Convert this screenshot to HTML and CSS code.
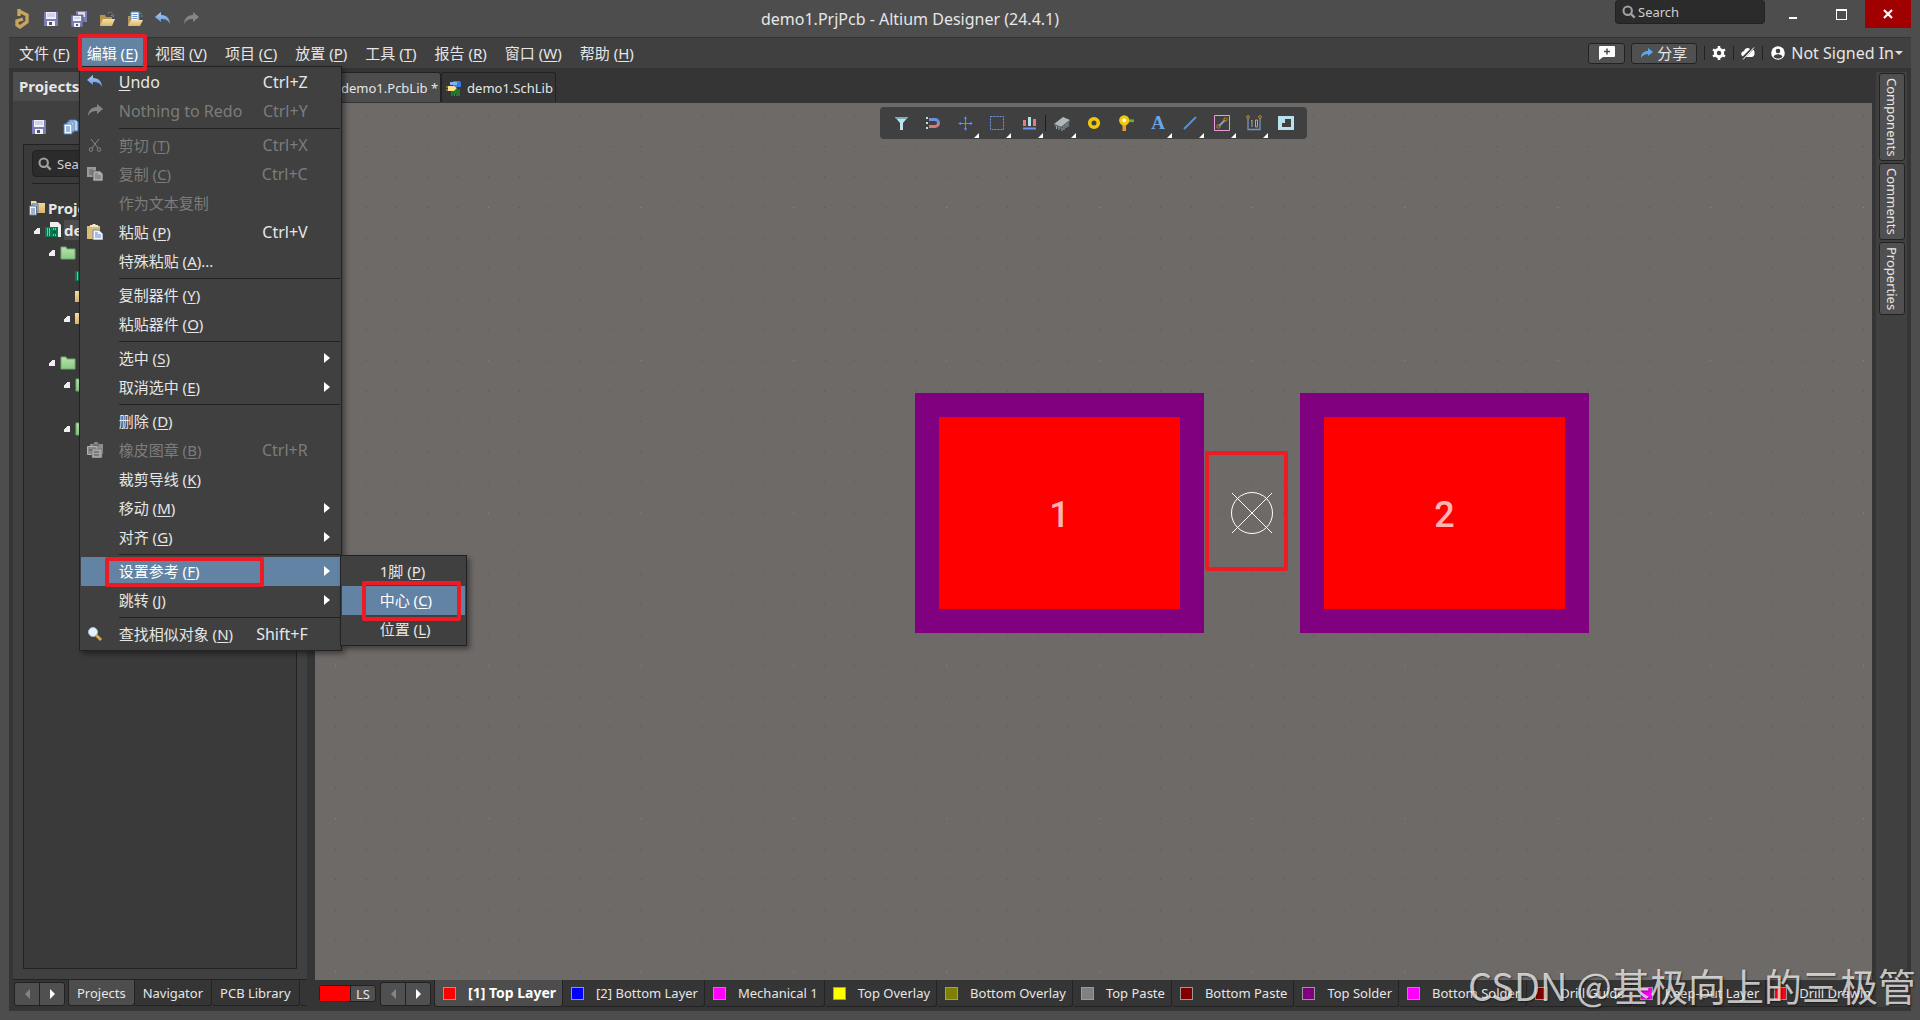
FILE: index.html
```html
<!DOCTYPE html>
<html lang="zh-CN">
<head>
<meta charset="utf-8">
<meta name="viewport" content="width=device-width, initial-scale=1">
<title>demo1.PrjPcb - Altium Designer (24.4.1)</title>
<link rel="stylesheet" href="styles.css">
</head>
<body class="app">
<svg class="defs" aria-hidden="true">
  <defs>
    <linearGradient id="g-blue" x1="0" y1="0" x2="0" y2="1"><stop offset="0" stop-color="#a9cdf7"/><stop offset="1" stop-color="#5f8fdc"/></linearGradient>
    <linearGradient id="g-folder" x1="0" y1="0" x2="0" y2="1"><stop offset="0" stop-color="#f6dfa6"/><stop offset="1" stop-color="#d9b568"/></linearGradient>
    <linearGradient id="g-green" x1="0" y1="0" x2="0" y2="1"><stop offset="0" stop-color="#b9e3b0"/><stop offset="1" stop-color="#8bca84"/></linearGradient>
    <symbol id="i-logo" viewBox="0 0 16 20"><path d="M4 0v7M4 2l8 4v7l-7 5-3-2v-4l6-2" fill="none" stroke="#c6a55c" stroke-width="3.400"/></symbol>
    <symbol id="i-save" viewBox="0 0 16 16"><path d="M1 1h14v14H1z" fill="#7b7cb8"/><path d="M3 1h10v7H3z" fill="#eef0fa"/><path d="M4 3h8M4 5h8" stroke="#b4b6d8"/><path d="M4 10h8v5H4z" fill="#f4f4f4"/><path d="M6 11h3v3H6z" fill="#555"/></symbol>
    <symbol id="i-saveall" viewBox="0 0 16 16"><path d="M5 0h11v11H5z" fill="#7b7cb8"/><path d="M7 1h7v5H7z" fill="#d8dbf2"/><path d="M0 4h12v12H0z" fill="#7b7cb8" stroke="#4d4d4d" stroke-width=".6"/><path d="M2 5h8v5H2z" fill="#eef0fa"/><path d="M3 7h6" stroke="#b4b6d8"/><path d="M3 12h6v4H3z" fill="#f4f4f4"/><path d="M5 13h2v2H5z" fill="#555"/></symbol>
    <symbol id="i-open" viewBox="0 0 16 16"><path d="M1 4h5l1 2h6v9H1z" fill="#b99352"/><path d="M4 8h12l-3 7H1z" fill="url(#g-folder)"/><path d="M9 2c3-2 5 0 5 3M12 4l2 2 2-2" fill="none" stroke="#5c91b5" stroke-dasharray="2 1"/></symbol>
    <symbol id="i-opendoc" viewBox="0 0 16 16"><path d="M1 5h4v10H1z" fill="#b99352"/><path d="M4 1h8v9H4z" fill="#f5f8ff" stroke="#5d8fc9"/><path d="M5.500 3.500h5M5.500 5.500h5M5.500 7.500h5" stroke="#6b93c9"/><path d="M4 9h12l-3 6H1z" fill="url(#g-folder)"/><path d="M13 2c2 0 2 2 2 4" fill="none" stroke="#5c91b5" stroke-dasharray="2 1"/></symbol>
    <symbol id="i-undo" viewBox="0 0 16 16"><path d="M6 1v3c6 0 9 4 9 9-2-4-5-5-9-5v3L0 6z" fill="url(#g-blue)"/></symbol>
    <symbol id="i-redo" viewBox="0 0 16 16"><path d="M10 1v3c-6 0-9 4-9 9 2-4 5-5 9-5v3l6-5z" fill="#858585"/></symbol>
    <symbol id="i-cut" viewBox="0 0 16 16"><path d="M4 2l7 9M12 2l-7 9" stroke="#858585" fill="none"/><circle cx="4" cy="12.500" r="1.800" fill="none" stroke="#858585"/><circle cx="12" cy="12.500" r="1.800" fill="none" stroke="#858585"/></symbol>
    <symbol id="i-copy" viewBox="0 0 16 16"><path d="M0 1h9v10H0z" fill="#9a9a9a"/><path d="M2 4h4M2 6h4M2 8h4" stroke="#5d5d5d"/><path d="M6 5h7l3 3v7H6z" fill="#adadad" stroke="#505050" stroke-width=".7"/><path d="M8 8h3M8 10h6M8 12h6" stroke="#6d6d6d"/></symbol>
    <symbol id="i-pages" viewBox="0 0 16 16"><path d="M6 1h7l2 2v9H6z" fill="#b7d3f2" stroke="#4a7ab5"/><path d="M4 3h7v10H4z" fill="#d4e5f8" stroke="#4a7ab5"/><path d="M1 5h8v10H1z" fill="#f5f8ff" stroke="#4a7ab5"/><path d="M3 8h4M3 10h4M3 12h4" stroke="#4a7ab5"/></symbol>
    <symbol id="i-paste" viewBox="0 0 16 16"><path d="M0 2h13v13H0z" fill="#dcbc72"/><path d="M3 3V1h2l1-1h2l1 1h2v2z" fill="#f4e9c9"/><path d="M6 6h6l4 4v6H6z" fill="#eef3fb" stroke="#6b8bb9"/><path d="M8 9h3M8 11h6M8 13h6" stroke="#6b8bb9"/></symbol>
    <symbol id="i-stamp" viewBox="0 0 16 16"><path d="M3 2h3l2-2h2l2 2h4v10H3z" fill="#8d8d8d"/><path d="M.5 4.500h9v8h-9z" fill="#8a8a8a" stroke="#b0b0b0"/><path d="M5 7h10v9H5z" fill="#a5a5a5" stroke="#606060" stroke-width=".5"/><path d="M7 10h5M7 13h5M2 8h3M6 3h6" stroke="#505050"/></symbol>
    <symbol id="i-find" viewBox="0 0 16 16"><path d="M9 9l5 5" stroke="#dba545" stroke-width="3"/><circle cx="6" cy="6" r="4.500" fill="#e8f1fb" stroke="#a3bddb"/></symbol>
    <symbol id="i-search" viewBox="0 0 16 16"><circle cx="6.500" cy="6.500" r="4.800" fill="none" stroke="#a0a0a0" stroke-width="2.400"/><path d="M10 10l4.500 4.500" stroke="#a0a0a0" stroke-width="2.800"/></symbol>
    <symbol id="i-projects" viewBox="0 0 16 16"><path d="M2 1h5l1 2h8v10H2z" fill="url(#g-folder)"/><path d="M3 4h6v8H3z" fill="#b7cbe8" stroke="#59719c"/><path d="M0.500 6h7v9h-7z" fill="#eef3fb" stroke="#59719c"/><path d="M2 9h4M2 11h4M2 13h4" stroke="#59719c"/></symbol>
    <symbol id="i-prj" viewBox="0 0 16 16"><path d="M5 0h8l3 3v12H5z" fill="#eef0f0"/><path d="M0 5h13v10H0z" fill="#087a50"/><path d="M2 7h4M2 9h4M2 11h4M2 13h4M8 7h3M8 13h3" stroke="#fff" stroke-dasharray="1 1"/><path d="M8 9h3v2H8z" fill="#0a5a3c"/></symbol>
    <symbol id="i-gfolder" viewBox="0 0 16 16"><path d="M1 3h5l1 2h8v10H1z" fill="url(#g-green)" stroke="#6fa869"/></symbol>
    <symbol id="i-yfolder" viewBox="0 0 16 16"><path d="M0 3h16v11H0z" fill="url(#g-folder)"/></symbol>
    <symbol id="i-sch" viewBox="0 0 16 16"><path d="M7 1h7l1 2v4H7z" fill="#3b7be0"/><path d="M4 2h7v3H4z" fill="#7db3f5"/><path d="M5 9h9v5H5z" fill="#187a2a"/><path d="M6 14v2M8.500 14v2M11 14v2M13 14v2" stroke="#35a448"/><path d="M2 6h6l3 2-3 3H2z" fill="#ffe28a"/><path d="M0 7h2M0 10h2" stroke="#caa02e"/></symbol>
    <symbol id="i-filter" viewBox="0 0 16 16"><path d="M2 2h13L10 8v7H7V8z" fill="#bfe3ea"/><path d="M2 2h13l-1 2H3z" fill="#73aebb"/></symbol>
    <symbol id="i-magnet" viewBox="0 0 16 16"><path d="M4 4.500h6a3.500 3.500 0 0 1 3.500 3.500" fill="none" stroke="#6e8fe0" stroke-width="3"/><path d="M13.500 8A3.500 3.500 0 0 1 10 11.500H4" fill="none" stroke="#d5797f" stroke-width="3"/><path d="M1 3h2M1 8h2M1 13h2" stroke="#b8e0df" stroke-width="2"/></symbol>
    <symbol id="i-cross" viewBox="0 0 16 16"><path d="M8.500 3v11M3 8.500h11" stroke="#5f8fe8"/><path d="M8.500 1l1.500 3H7zM8.500 16l1.500-3H7zM1 8.500l3-1.500v3zM16 8.500l-3-1.500v3z" fill="#5f8fe8"/></symbol>
    <symbol id="i-select" viewBox="0 0 16 16"><path d="M1.500 1.500h13v13h-13z" fill="none" stroke="#6e93ea" stroke-dasharray="2 1"/></symbol>
    <symbol id="i-align" viewBox="0 0 16 16"><path d="M2 5h3v6H2zM12 4h3v7h-3z" fill="#e77b7b"/><path d="M7 2h3v9H7z" fill="#b6e0ef"/><path d="M2 13.500h13" stroke="#6e93ea" stroke-width="2"/></symbol>
    <symbol id="i-chip" viewBox="0 0 16 16"><path d="M0 9l9-7 7 3-9 7z" fill="#b3b6b9"/><path d="M0 9l7 3 9-7v2l-9 7-7-3z" fill="#5b646b"/><path d="M2.500 11v3M5 12v3M8 13v3M10 11v4M12 9v4M14 8v4" stroke="#8fa8b9"/></symbol>
    <symbol id="i-pad" viewBox="0 0 16 16"><circle cx="8" cy="8" r="4.300" fill="none" stroke="#f2c80e" stroke-width="3.600"/></symbol>
    <symbol id="i-via" viewBox="0 0 18 18"><path d="M11 6.500h7" stroke="#62b337" stroke-width="3"/><path d="M7 10v8" stroke="#e59b3a" stroke-width="4"/><circle cx="7" cy="6" r="4" fill="#fff" stroke="#f2c80e" stroke-width="3.600"/></symbol>
    <symbol id="i-line" viewBox="0 0 16 16"><path d="M2 14L14 2" stroke="#4c94e3" stroke-width="2"/></symbol>
    <symbol id="i-route" viewBox="0 0 16 16"><path d="M.5.500h15v15H.5z" fill="none" stroke="#e99ae0"/><path d="M5 11l6-6" stroke="#7b9bd6" stroke-width="2"/><circle cx="4.500" cy="11.500" r="1.700" fill="none" stroke="#c08a1c"/><circle cx="11.500" cy="4.500" r="1.700" fill="none" stroke="#c08a1c"/></symbol>
    <symbol id="i-dim" viewBox="0 0 16 16"><path d="M2 3v11.500h12V3" fill="none" stroke="#6f95c5" stroke-width="1.300"/><circle cx="2" cy="2" r="1.400" fill="none" stroke="#c08a1c"/><circle cx="14" cy="2" r="1.400" fill="none" stroke="#c08a1c"/><path d="M5 6l1-1v7M9.500 5h2v7h-2z" fill="none" stroke="#a8a8a8"/></symbol>
    <symbol id="i-poly" viewBox="0 0 16 16"><path d="M0 1h16v14H0z" fill="#b9e2f0"/><path d="M7 4h6v8H4V8h3z" fill="#404040"/></symbol>
    <symbol id="i-comment" viewBox="0 0 18 16"><path d="M2 1h14a1 1 0 0 1 1 1v9a1 1 0 0 1-1 1H5l-4 3V2a1 1 0 0 1 1-1z" fill="#fff"/><path d="M9 3.500v6M6 6.500h6" stroke="#4d4d4d" stroke-width="1.500"/></symbol>
    <symbol id="i-share" viewBox="0 0 12 10"><path d="M7 0l5 4-5 4V6C4 6 2 7 0 10c0-5 3-7 7-7z" fill="#5aa9f2"/></symbol>
    <symbol id="i-gear" viewBox="0 0 14 14"><circle cx="7" cy="7" r="3.700" fill="none" stroke="#fff" stroke-width="3"/><path d="M7 0v3M7 11v3M1 3.500l2.500 1.500M10.500 9l2.500 1.500M1 10.500L3.500 9M10.500 5L13 3.500" stroke="#fff" stroke-width="2.600"/></symbol>
    <symbol id="i-cloud" viewBox="0 0 14 14"><path d="M3 11a3 3 0 0 1-2-5l2-1c1-3 4-4 6-2l4 1c1 3 1 6-2 7z" fill="#fff"/><path d="M1 13L13 1" stroke="#404040" stroke-width="2.500"/><path d="M2 13.500L13 1.500" stroke="#fff"/></symbol>
    <symbol id="i-user" viewBox="0 0 14 14"><circle cx="7" cy="7" r="6.800" fill="#fff"/><circle cx="7" cy="5" r="2.300" fill="#404040"/><path d="M2.500 10.500c2-3 7-3 9 0-2 2.700-7 2.700-9 0z" fill="#404040"/></symbol>
  </defs>
</svg>

<header class="titlebar">
  <div class="quick">
    <span class="quick-cell"><svg class="logo"><use href="#i-logo"/></svg></span>
    <button class="quick-cell" aria-label="Save"><svg class="ico"><use href="#i-save"/></svg></button>
    <button class="quick-cell" aria-label="Save all"><svg class="ico"><use href="#i-saveall"/></svg></button>
    <button class="quick-cell" aria-label="Open"><svg class="ico"><use href="#i-open"/></svg></button>
    <button class="quick-cell" aria-label="Open document"><svg class="ico"><use href="#i-opendoc"/></svg></button>
    <button class="quick-cell" aria-label="Undo"><svg class="ico"><use href="#i-undo"/></svg></button>
    <button class="quick-cell" aria-label="Redo"><svg class="ico"><use href="#i-redo"/></svg></button>
  </div>
  <h1 class="title">demo1.PrjPcb - Altium Designer (24.4.1)</h1>
  <div class="window-side">
    <label class="search-top"><svg class="ico-sm"><use href="#i-search"/></svg><input type="text" placeholder="Search" aria-label="Search"></label>
    <button class="win-btn" aria-label="Minimize"><span class="win-min"></span></button>
    <button class="win-btn" aria-label="Maximize"><span class="win-max"></span></button>
    <button class="win-btn win-close" aria-label="Close"><svg viewBox="0 0 10 10"><path d="M1 1l8 8M9 1L1 9" stroke="#fff" stroke-width="2.200"/></svg></button>
  </div>
</header>

<div class="menubar">
  <nav class="menus">
    <button class="menu-btn">文件 (<u>F</u>)</button>
    <div class="menu-holder">
      <button class="menu-btn is-open">编辑 (<u>E</u>)</button>
      <span class="mark mark-edit"></span>
      <div class="menu">
        <button class="mi"><svg class="ico"><use href="#i-undo"/></svg><span class="ml latin"><u>U</u>ndo</span><kbd>Ctrl+Z</kbd></button>
        <button class="mi" disabled><svg class="ico"><use href="#i-redo"/></svg><span class="ml latin">Nothing to Redo</span><kbd>Ctrl+Y</kbd></button>
        <hr>
        <button class="mi" disabled><svg class="ico"><use href="#i-cut"/></svg><span class="ml">剪切 (<u>T</u>)</span><kbd>Ctrl+X</kbd></button>
        <button class="mi" disabled><svg class="ico"><use href="#i-copy"/></svg><span class="ml">复制 (<u>C</u>)</span><kbd>Ctrl+C</kbd></button>
        <button class="mi" disabled><span class="ico"></span><span class="ml">作为文本复制</span></button>
        <button class="mi"><svg class="ico"><use href="#i-paste"/></svg><span class="ml">粘贴 (<u>P</u>)</span><kbd>Ctrl+V</kbd></button>
        <button class="mi"><span class="ico"></span><span class="ml">特殊粘贴 (<u>A</u>)...</span></button>
        <hr>
        <button class="mi"><span class="ico"></span><span class="ml">复制器件 (<u>Y</u>)</span></button>
        <button class="mi"><span class="ico"></span><span class="ml">粘贴器件 (<u>O</u>)</span></button>
        <hr>
        <button class="mi has-sub"><span class="ico"></span><span class="ml">选中 (<u>S</u>)</span></button>
        <button class="mi has-sub"><span class="ico"></span><span class="ml">取消选中 (<u>E</u>)</span></button>
        <hr>
        <button class="mi"><span class="ico"></span><span class="ml">删除 (<u>D</u>)</span></button>
        <button class="mi" disabled><svg class="ico"><use href="#i-stamp"/></svg><span class="ml">橡皮图章 (<u>B</u>)</span><kbd>Ctrl+R</kbd></button>
        <button class="mi"><span class="ico"></span><span class="ml">裁剪导线 (<u>K</u>)</span></button>
        <button class="mi has-sub"><span class="ico"></span><span class="ml">移动 (<u>M</u>)</span></button>
        <button class="mi has-sub"><span class="ico"></span><span class="ml">对齐 (<u>G</u>)</span></button>
        <hr>
        <div class="sub-holder">
          <button class="mi has-sub is-hot"><span class="ico"></span><span class="ml">设置参考 (<u>F</u>)</span></button>
          <span class="mark mark-ref"></span>
          <div class="menu submenu">
            <button class="mi">1脚 (<u>P</u>)</button>
            <div class="sub-holder">
              <button class="mi is-hot">中心 (<u>C</u>)</button>
              <span class="mark mark-center"></span>
            </div>
            <button class="mi">位置 (<u>L</u>)</button>
          </div>
        </div>
        <button class="mi has-sub"><span class="ico"></span><span class="ml">跳转 (<u>J</u>)</span></button>
        <hr>
        <button class="mi"><svg class="ico"><use href="#i-find"/></svg><span class="ml">查找相似对象 (<u>N</u>)</span><kbd>Shift+F</kbd></button>
      </div>
    </div>
    <button class="menu-btn">视图 (<u>V</u>)</button>
    <button class="menu-btn">项目 (<u>C</u>)</button>
    <button class="menu-btn">放置 (<u>P</u>)</button>
    <button class="menu-btn">工具 (<u>T</u>)</button>
    <button class="menu-btn">报告 (<u>R</u>)</button>
    <button class="menu-btn">窗口 (<u>W</u>)</button>
    <button class="menu-btn">帮助 (<u>H</u>)</button>
  </nav>
  <div class="account">
    <button class="chip" aria-label="Add comment"><svg class="ico-comment"><use href="#i-comment"/></svg></button>
    <button class="chip chip-share"><svg class="ico-share"><use href="#i-share"/></svg>分享</button>
    <button class="flat" aria-label="Settings"><svg class="ico-sm"><use href="#i-gear"/></svg></button>
    <button class="flat" aria-label="Server status"><svg class="ico-sm"><use href="#i-cloud"/></svg></button>
    <button class="flat flat-user latin"><svg class="ico-sm"><use href="#i-user"/></svg>Not Signed In<span class="caret"></span></button>
  </div>
</div>

<main class="work">
  <aside class="side">
    <h2 class="side-head">Projects</h2>
    <div class="side-body">
      <div class="side-tools">
        <button aria-label="Save"><svg class="ico"><use href="#i-save"/></svg></button>
        <button aria-label="Pages"><svg class="ico"><use href="#i-pages"/></svg></button>
      </div>
      <div class="tree-box">
        <label class="search-side"><svg class="ico-sm"><use href="#i-search"/></svg><input type="text" placeholder="Search" aria-label="Search projects"></label>
        <ul class="tree">
          <li class="strong"><svg class="ico"><use href="#i-projects"/></svg><span>Project</span></li>
          <li class="strong l1"><i class="tw"></i><svg class="ico"><use href="#i-prj"/></svg><span class="cur">demo1</span></li>
          <li class="l2"><i class="tw"></i><svg class="ico"><use href="#i-gfolder"/></svg></li>
          <li class="l3"><i class="tw none"></i><svg class="ico"><use href="#i-prj"/></svg></li>
          <li class="l3"><i class="tw none"></i><svg class="ico"><use href="#i-yfolder"/></svg></li>
          <li class="l3"><i class="tw"></i><svg class="ico"><use href="#i-yfolder"/></svg></li>
          <li></li>
          <li class="l2"><i class="tw"></i><svg class="ico"><use href="#i-gfolder"/></svg></li>
          <li class="l3"><i class="tw"></i><svg class="ico"><use href="#i-gfolder"/></svg></li>
          <li></li>
          <li class="l3"><i class="tw"></i><svg class="ico"><use href="#i-gfolder"/></svg></li>
        </ul>
      </div>
    </div>
    <div class="side-tabs">
      <div class="pager"><button aria-label="Previous panel"><i class="tri-l"></i></button><button aria-label="Next panel"><i class="tri-r"></i></button></div>
      <div class="tabs">
        <button class="tab is-on">Projects</button><button class="tab">Navigator</button><button class="tab">PCB Library</button><button class="tab" aria-label="More panels"></button>
      </div>
    </div>
  </aside>

  <section class="center">
    <div class="doc-tabs">
      <button class="doc-tab is-on"><svg class="ico"><use href="#i-sch"/></svg>demo1.PcbLib *</button>
      <button class="doc-tab"><svg class="ico"><use href="#i-sch"/></svg>demo1.SchLib</button>
    </div>
    <div class="canvas">
      <svg class="grid" aria-hidden="true">
        <defs>
          <pattern id="dots" x="20" y="104" width="152.800" height="152.800" patternUnits="userSpaceOnUse">
            <g fill="#565251">
              <path d="M31 0h1v1h-1zM61 0h1v1h-1zM92 0h1v1h-1zM122 0h1v1h-1z"/>
              <path d="M0 31h1v1H0zM31 31h1v1h-1zM61 31h1v1h-1zM92 31h1v1h-1zM122 31h1v1h-1z"/>
              <path d="M0 61h1v1H0zM31 61h1v1h-1zM61 61h1v1h-1zM92 61h1v1h-1zM122 61h1v1h-1z"/>
              <path d="M0 92h1v1H0zM31 92h1v1h-1zM61 92h1v1h-1zM92 92h1v1h-1zM122 92h1v1h-1z"/>
              <path d="M0 122h1v1H0zM31 122h1v1h-1zM61 122h1v1h-1zM92 122h1v1h-1zM122 122h1v1h-1z"/>
            </g>
            <path d="M0 0h1v1H0z" fill="#8f8b89"/>
          </pattern>
        </defs>
        <rect width="100%" height="100%" fill="url(#dots)"/>
      </svg>
      <div class="toolbar">
        <button aria-label="Filter"><svg class="ico"><use href="#i-filter"/></svg></button>
        <button aria-label="Snap"><svg class="ico"><use href="#i-magnet"/></svg></button>
        <button class="more" aria-label="Move"><svg class="ico"><use href="#i-cross"/></svg></button>
        <button class="more" aria-label="Select"><svg class="ico"><use href="#i-select"/></svg></button>
        <button class="more" aria-label="Align"><svg class="ico"><use href="#i-align"/></svg></button>
        <span class="tb-sep"></span>
        <button class="more" aria-label="Component"><svg class="ico"><use href="#i-chip"/></svg></button>
        <button aria-label="Pad"><svg class="ico"><use href="#i-pad"/></svg></button>
        <button aria-label="Via"><svg class="ico"><use href="#i-via"/></svg></button>
        <button class="more letter">A</button>
        <button class="more" aria-label="Line"><svg class="ico"><use href="#i-line"/></svg></button>
        <button class="more" aria-label="Route"><svg class="ico"><use href="#i-route"/></svg></button>
        <button class="more" aria-label="Dimension"><svg class="ico"><use href="#i-dim"/></svg></button>
        <button aria-label="Polygon"><svg class="ico"><use href="#i-poly"/></svg></button>
      </div>
      <div class="pad pad-1">1</div>
      <div class="pad pad-2">2</div>
      <svg class="origin" viewBox="0 0 44 44"><circle cx="22" cy="22" r="20.500"/><path d="M2 2l40 40M42 2L2 42"/></svg>
      <span class="mark mark-origin"></span>
    </div>
    <div class="layers">
      <button class="layer-set"><i class="ls-color"></i><span>LS</span></button>
      <div class="pager"><button aria-label="Previous layer"><i class="tri-l"></i></button><button aria-label="Next layer"><i class="tri-r"></i></button></div>
      <div class="tabs">
        <button class="tab layer is-on"><i class="sw c-red"></i>[1] Top Layer</button>
        <button class="tab layer"><i class="sw c-blue"></i>[2] Bottom Layer</button>
        <button class="tab layer"><i class="sw c-magenta"></i>Mechanical 1</button>
        <button class="tab layer"><i class="sw c-yellow"></i>Top Overlay</button>
        <button class="tab layer"><i class="sw c-olive"></i>Bottom Overlay</button>
        <button class="tab layer"><i class="sw c-gray"></i>Top Paste</button>
        <button class="tab layer"><i class="sw c-maroon"></i>Bottom Paste</button>
        <button class="tab layer"><i class="sw c-purple"></i>Top Solder</button>
        <button class="tab layer"><i class="sw c-magenta"></i>Bottom Solder</button>
        <button class="tab layer"><i class="sw c-maroon"></i>Drill Guide</button>
        <button class="tab layer"><i class="sw c-magenta"></i>Keep-Out Layer</button>
        <button class="tab layer"><i class="sw c-crimson"></i>Drill Drawing</button>
      </div>
    </div>
  </section>

  <nav class="rail">
    <button>Components</button>
    <button>Comments</button>
    <button>Properties</button>
  </nav>
</main>
<div class="watermark">CSDN @基极向上的三极管</div>
</body>
</html>
```

FILE: styles.css
```css
* { box-sizing: border-box; }

:root {
  --frame: #4d4d4d;
  --bar: #404040;
  --well: #353535;
  --edge: #222;
  --hot: #6283a3;
  --text: #e6e6e6;
  --mark: #ed1c24;
  --ui: "Noto Sans", "Noto Sans CJK SC", sans-serif;
}

html { background: var(--frame); }

.app {
  position: relative;
  display: flex;
  flex-direction: column;
  min-height: 100vh;
  margin: 0;
  padding: 0 9px 9px;
  background: var(--frame);
  color: var(--text);
  font: 13px/20px var(--ui);
  overflow-x: hidden;
}

button, input, kbd { font: inherit; color: inherit; }
button { margin: 0; padding: 0; border: 0; background: none; white-space: nowrap; }
input { width: 100%; min-width: 0; padding: 0; border: 0; background: none; outline: 0; }
input::placeholder { color: #d0d0d0; opacity: 1; }
i { font-style: normal; }
u { text-underline-offset: 2px; }

.defs { position: absolute; width: 0; height: 0; }
.ico { flex: none; width: 16px; height: 16px; display: block; }
.ico-sm { flex: none; width: 14px; height: 14px; display: block; }
.latin, kbd { font-size: 16px; }

/* Title bar */
.titlebar { display: flex; height: 37px; }
.quick { display: flex; width: 196px; align-items: center; }
.quick-cell { display: flex; justify-content: center; width: 28px; }
.logo { width: 16px; height: 20px; }
.title { flex: 1; margin: 0; text-align: center; font: 16px/38px var(--ui); }
.window-side { display: flex; align-items: flex-start; width: 296px; }
.search-top {
  display: flex; align-items: center; gap: 2px;
  width: 150px; height: 24px; margin-right: 4px; padding: 0 6px;
  background: #2b2b2b; border: 1px solid var(--edge); border-top: 0; border-radius: 4px;
}
.win-btn { width: 48px; height: 28px; display: flex; align-items: center; justify-content: center; }
.win-min { width: 8px; height: 2px; margin-top: 8px; background: #fff; }
.win-max { width: 11px; height: 11px; border: 1px solid #fff; border-top-width: 2px; }
.win-close { width: 46px; background: #a00000; }
.win-close svg { width: 10px; height: 10px; }

/* Menu bar */
.menubar {
  display: flex; justify-content: space-between;
  height: 31px; background: var(--bar); border-top: 1px solid var(--well);
  font-size: 15px;
}
.menus { display: flex; padding-left: 1px; }
.menu-btn { height: 30px; padding: 0 9px; }
.menu-holder { position: relative; }
.menu-btn.is-open { padding: 0 8px; background: var(--hot); color: #fff; }

.mark {
  position: absolute; z-index: 5;
  border: 4px solid var(--mark); border-radius: 2px;
  pointer-events: none;
}
.mark-edit { left: -1px; right: -1px; top: -4px; bottom: -3px; }

.menu {
  position: absolute; z-index: 3; left: 0; top: 28px;
  width: 263px; padding: 1px;
  background: var(--bar); border: 1px solid var(--edge);
  box-shadow: 3px 3px 5px rgba(0, 0, 0, .4);
}
.menu hr { height: 1px; margin: 2px 0 2px 38px; border: 0; background: var(--edge); }
.mi {
  position: relative;
  display: flex; align-items: center;
  width: 100%; height: 29px; padding: 0 32px 2px 6px;
  text-align: left;
}
.mi .ico { margin-right: 16px; }
.mi .ml { flex: 1; }
.mi:disabled { color: #7c7c7c; }
.mi.is-hot { background: var(--hot); color: #fff; }
.has-sub::after {
  content: ""; position: absolute; right: 10px; top: 9px;
  border-left: 6px solid #fff; border-top: 5px solid transparent; border-bottom: 5px solid transparent;
}
.sub-holder { position: relative; }
.mark-ref { left: 24px; right: 76px; top: 0; bottom: -1px; }
.submenu { left: 259px; top: -2px; width: 127px; }
.submenu .mi { padding: 0 0 2px 38px; }
.mark-center { left: 20px; right: 4px; top: -5px; bottom: -6px; }

.account { display: flex; align-items: center; padding-right: 8px; }
.chip {
  display: flex; align-items: center; justify-content: center; gap: 4px;
  width: 37px; height: 21px; margin-right: 6px;
  background: #505050; border: 1px solid var(--edge); border-radius: 3px;
}
.chip-share { width: 66px; margin-right: 7px; }
.ico-comment { width: 18px; height: 16px; }
.ico-share { width: 12px; height: 10px; }
.flat { display: flex; align-items: center; height: 14px; padding: 0 7px; border-left: 1px solid var(--edge); }
.flat-user { gap: 6px; padding: 0 0 0 8px; }
.caret { margin-left: -5px; border-top: 4px solid #ddd; border-left: 4px solid transparent; border-right: 4px solid transparent; }

/* Work area */
.work {
  flex: 1;
  display: grid;
  grid-template-columns: 294px minmax(0, 1fr) 31px;
  padding: 4px;
  background: var(--well);
}
.side { display: flex; flex-direction: column; min-width: 0; }
.side-head { margin: 0; padding: 0 6px; background: var(--frame); font: bold 15px/29px var(--ui); }
.side-body { flex: 1; display: flex; flex-direction: column; padding: 0 10px 10px; background: var(--bar); border-bottom: 1px solid var(--edge); }
.side-tools { display: flex; gap: 16px; height: 43px; padding: 8px 8px 0; align-items: center; }
.tree-box { flex: 1; padding: 5px 8px; background: #3a3a3a; border: 1px solid var(--edge); }
.search-side {
  display: flex; align-items: center; gap: 5px; height: 27px; padding: 0 5px;
  background: #2b2b2b; border: 1px solid var(--edge); border-radius: 4px;
}
.tree { margin: 6px 0 0; padding: 13px 0 0; list-style: none; border-top: 1px solid var(--edge); }
.tree li { display: flex; align-items: center; height: 22px; margin-left: -3px; gap: 3px; }
.tree .l1 { padding-left: 3px; }
.tree .l2 { padding-left: 18px; }
.tree .l3 { padding-left: 33px; }
.tree .strong { font-size: 15px; font-weight: bold; }
.cur { background: var(--frame); }
.tw { width: 8px; height: 8px; margin-right: 2px; background: linear-gradient(135deg, transparent 50%, #eee 50%); clip-path: inset(2px 0 0 2px); }
.tw.none { background: none; }

.side-tabs, .layers { display: flex; height: 27px; min-width: 0; overflow: hidden; }
.side-tabs { padding-left: 1px; }
.pager {
  flex: none; display: flex; width: 51px; height: 24px; margin: 2px 3px 0 0;
  background: #505050; border: 1px solid var(--edge); border-radius: 3px;
}
.pager button { flex: 1; display: flex; align-items: center; justify-content: center; }
.pager button + button { border-left: 1px solid var(--edge); }
.tri-l { border-right: 5px solid #858585; border-top: 5px solid transparent; border-bottom: 5px solid transparent; }
.tri-r { border-left: 5px solid #fff; border-top: 5px solid transparent; border-bottom: 5px solid transparent; }
.tabs { display: flex; min-width: 0; overflow: hidden; }
.tab {
  flex: none; height: 26px; padding: 0 8px;
  border: 1px solid var(--edge); border-width: 0 1px 1px 0; border-radius: 0 0 3px 3px;
}
.tab.is-on { background: var(--frame); border-left-width: 1px; }

.center { display: flex; flex-direction: column; min-width: 0; padding: 0 4px 0 8px; }
.doc-tabs { display: flex; height: 31px; }
.doc-tab {
  display: flex; align-items: center; gap: 5px; height: 30px; padding: 0 2px 0 4px;
  border: 1px solid var(--edge); border-bottom: 0; border-radius: 3px 3px 0 0;
}
.doc-tab.is-on { background: var(--frame); }

.canvas { position: relative; flex: 1; min-height: 620px; background: #6e6a68; overflow: hidden; }
.grid { position: absolute; inset: 0; width: 100%; height: 100%; }
.toolbar {
  position: absolute; left: 565px; top: 4px;
  display: flex; align-items: center; height: 32px; padding: 0 5px;
  background: var(--bar); border-radius: 4px;
}
.toolbar button { position: relative; display: flex; justify-content: center; align-items: center; width: 32px; height: 32px; }
.toolbar .more::after {
  content: ""; position: absolute; right: 2px; bottom: 1px;
  border-bottom: 5px solid #fff; border-left: 5px solid transparent;
}
.tb-sep { width: 1px; height: 16px; background: #1d1d1d; }
.toolbar .letter { color: #69a7ea; font: bold 19px "Liberation Serif", serif; }

.pad {
  position: absolute; top: 290px; width: 289px; height: 240px;
  border: 24px solid #800080; background: #f00;
  color: #ffb3b3; text-align: center; font: 500 36px/196px Roboto, sans-serif;
}
.pad-1 { left: 600px; }
.pad-2 { left: 985px; }
.origin { position: absolute; left: 915px; top: 388px; width: 44px; height: 44px; fill: none; stroke: #fff; }
.mark-origin { left: 890px; top: 348px; width: 83px; height: 120px; }

.layers { padding-left: 4px; }
.layer-set {
  flex: none; display: flex; width: 57px; height: 17px; margin: 5px 4px 0 0;
  background: #505050; border: 1px solid var(--edge); border-radius: 3px; line-height: 16px;
}
.ls-color { width: 31px; height: 15px; background: #f00; border-right: 1px solid var(--edge); }
.layer-set span { flex: 1; text-align: center; }
.layer { display: flex; align-items: center; gap: 12px; height: 27px; padding: 0 6px 0 8px; }
.layer.is-on { color: #fff; font-size: 14px; font-weight: bold; }
.sw { width: 13px; height: 13px; border: 1px solid #999; }
.c-red { background: #f00; }
.c-blue { background: #00f; }
.c-magenta { background: #f0f; }
.c-yellow { background: #ff0; }
.c-olive { background: #808000; }
.c-gray { background: #808080; }
.c-maroon { background: #800000; }
.c-purple { background: #800080; }
.c-crimson { background: #ff0020; }

.rail { display: flex; flex-direction: column; align-items: center; gap: 2px; padding-top: 1px; background: var(--bar); }
.rail button {
  width: 26px; padding: 4px 0; writing-mode: vertical-rl; line-height: 24px;
  background: #505050; border: 1px solid var(--edge); border-radius: 3px;
}

.watermark {
  position: absolute; right: 4px; bottom: 7px; z-index: 6;
  color: rgba(255, 255, 255, .72); text-shadow: 1px 1px 2px rgba(0, 0, 0, .5);
  font: 38px/56px "Noto Sans CJK SC", sans-serif;
  white-space: nowrap; pointer-events: none;
}
```
